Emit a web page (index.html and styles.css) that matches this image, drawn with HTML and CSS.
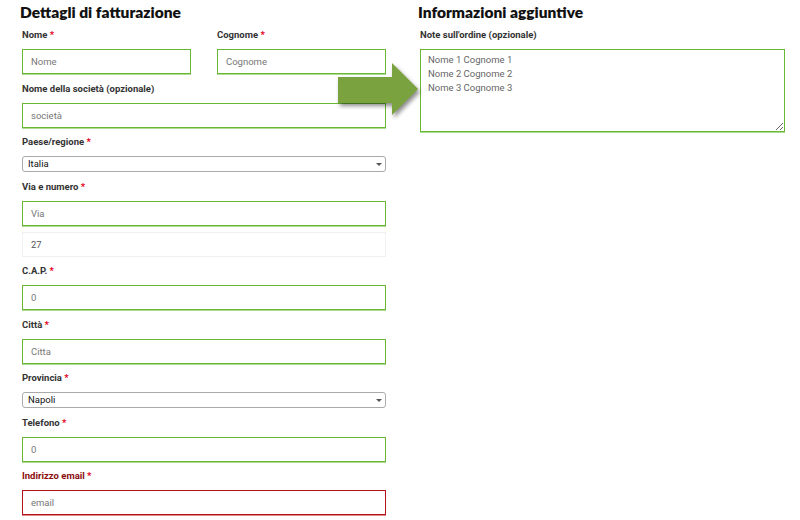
FILE: index.html
```html
<!DOCTYPE html>
<html lang="it">
<head>
    <meta charset="UTF-8">
    <meta name="viewport" content="width=device-width, initial-scale=1.0">
    <title>Checkout</title>
    <link rel="stylesheet" href="styles.css">
</head>
<body>
    <div class="checkout">
        <div class="billing">
            <h2>Dettagli di fatturazione</h2>
            <div class="row-2">
                <div class="field">
                    <label>Nome <span class="req">*</span></label>
                    <input class="ok" type="text" placeholder="Nome">
                </div>
                <div class="field">
                    <label>Cognome <span class="req">*</span></label>
                    <input class="ok" type="text" placeholder="Cognome">
                </div>
            </div>
            <div class="field">
                <label>Nome della società (opzionale)</label>
                <input class="ok" type="text" placeholder="società">
            </div>
            <div class="field">
                <label>Paese/regione <span class="req">*</span></label>
                <div class="select">Italia</div>
            </div>
            <div class="field">
                <label>Via e numero <span class="req">*</span></label>
                <input class="ok" type="text" placeholder="Via">
                <input class="plain" type="text" placeholder="27">
            </div>
            <div class="field">
                <label>C.A.P. <span class="req">*</span></label>
                <input class="ok" type="text" placeholder="0">
            </div>
            <div class="field">
                <label>Città <span class="req">*</span></label>
                <input class="ok" type="text" placeholder="Citta">
            </div>
            <div class="field">
                <label>Provincia <span class="req">*</span></label>
                <div class="select">Napoli</div>
            </div>
            <div class="field">
                <label>Telefono <span class="req">*</span></label>
                <input class="ok" type="text" placeholder="0">
            </div>
            <div class="field invalid">
                <label>Indirizzo email <span class="req">*</span></label>
                <input class="bad" type="text" placeholder="email">
            </div>
        </div>

        <div class="additional">
            <h2>Informazioni aggiuntive</h2>
            <div class="field">
                <label>Note sull'ordine (opzionale)</label>
                <textarea class="ok">Nome 1 Cognome 1
Nome 2 Cognome 2
Nome 3 Cognome 3</textarea>
            </div>
        </div>
    </div>

    <!-- freccia sovrapposta -->
    <svg class="arrow" width="84" height="56" viewBox="0 0 84 56">
        <polygon points="0,14 54,14 54,0 80,26 54,52 54,40 0,40" fill="#7aa23e"/>
    </svg>
</body>
</html>
```

FILE: styles.css
```css
body {
    margin: 0;
    background: #fff;
    font-family: Roboto, "Open Sans", sans-serif;
    color: #333;
}
.checkout {
    display: grid;
    grid-template-columns: 364px 365px;
    column-gap: 34px;
    padding: 2px 15px 0 22px;
}
h2 {
    font-family: Lato, "Open Sans", sans-serif;
    font-size: 15.5px;
    font-weight: 800;
    line-height: 20px;
    color: #111;
    margin: 0 0 6px -2px;
}
.row-2 {
    display: grid;
    grid-template-columns: 1fr 1fr;
    column-gap: 26px;
}
.field {
    margin-bottom: 7.5px;
}
label {
    display: block;
    font-size: 9.5px;
    font-weight: 700;
    line-height: 14px;
    margin-bottom: 7px;
    color: #333;
}
.req {
    color: #e2001a;
}
input, textarea {
    display: block;
    box-sizing: border-box;
    width: 100%;
    height: 25px;
    margin: 0;
    padding: 0 8px;
    font-family: Roboto, "Open Sans", sans-serif;
    font-size: 9.5px;
    color: #555;
    background: #fff;
    border: 1px solid #e8e8e8;
    border-radius: 0;
    outline: none;
}
input::placeholder {
    color: #777;
}
input.ok, textarea.ok {
    border-color: #68b834;
    box-shadow: 0 1px 0 #addb92;
}
input.plain {
    margin-top: 6px;
    border-color: #f0f0f0;
}
input.plain::placeholder {
    color: #555;
}
.invalid label {
    color: #8a0c0c;
}
input.bad {
    border-color: #b3121a;
    box-shadow: 0 1px 0 #e08a8a;
}
.select {
    position: relative;
    box-sizing: border-box;
    height: 16px;
    padding: 0 5px;
    font-size: 9.5px;
    line-height: 14px;
    color: #111;
    border: 1px solid #aaa;
    border-radius: 3px;
}
.select::after {
    content: "";
    position: absolute;
    right: 3px;
    top: 6px;
    border-left: 3px solid transparent;
    border-right: 3px solid transparent;
    border-top: 3px solid #555;
}
textarea {
    height: 83px;
    padding: 3px 7px;
    line-height: 14px;
    color: #666;
    resize: vertical;
    border-color: #80ab48;
    box-shadow: none;
}
.arrow {
    position: absolute;
    left: 338px;
    top: 63px;
    filter: drop-shadow(2px 3px 2px rgba(0, 0, 0, 0.45));
}
```
